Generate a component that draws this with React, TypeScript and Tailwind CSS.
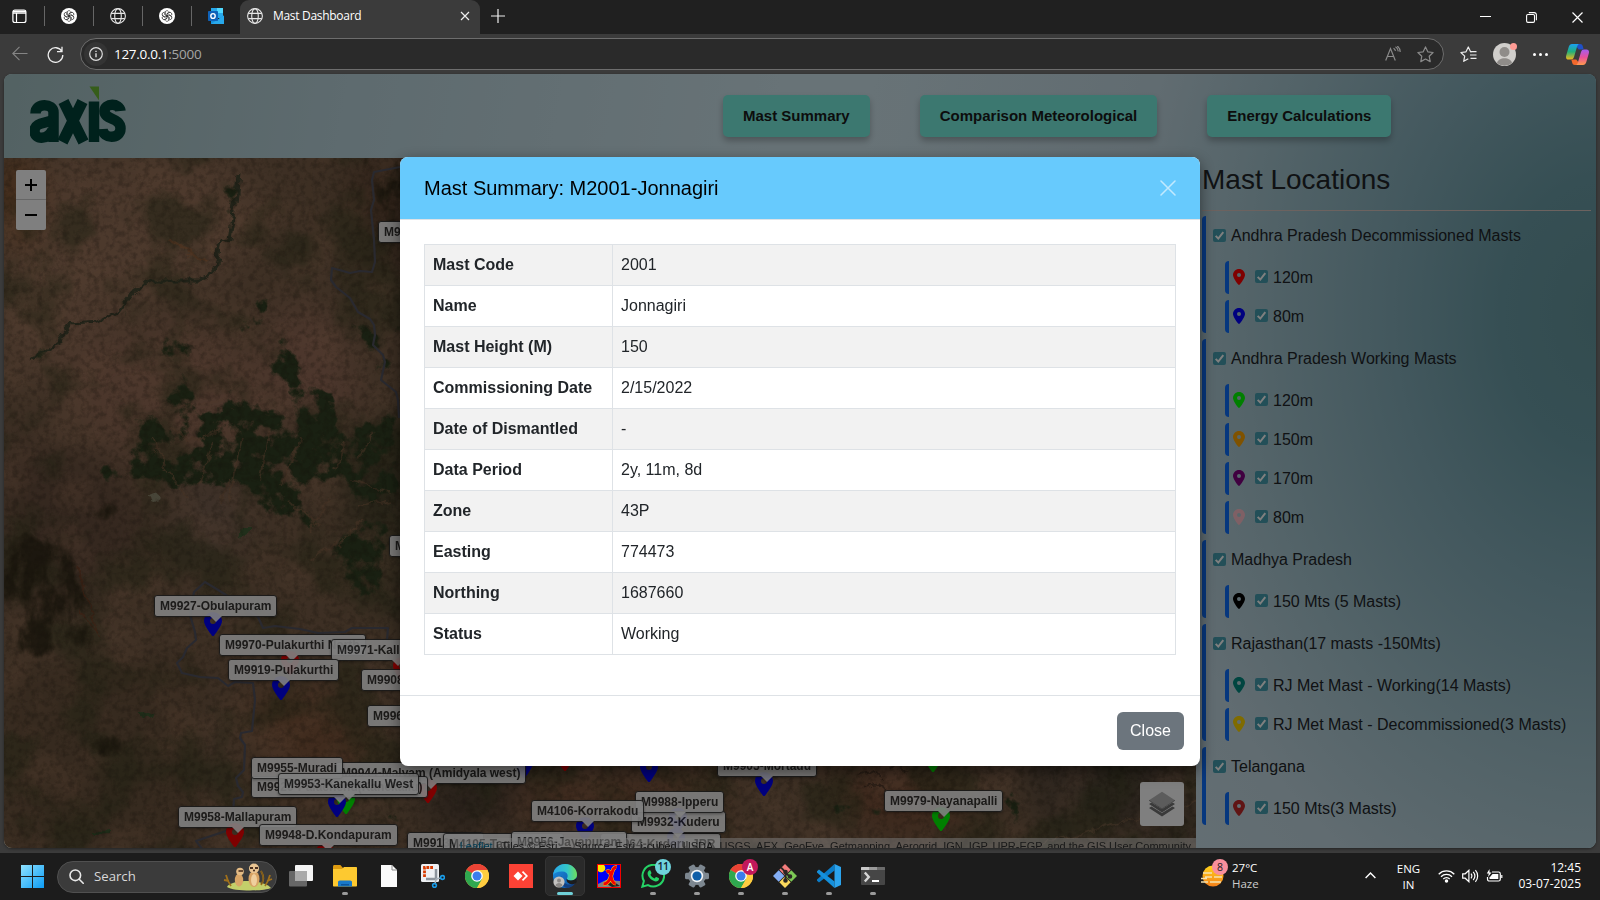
import React from "react";

const UI = "font-['Open_Sans','Noto_Sans',sans-serif]";
const PIN =
  "M215.7 499.2C267 435 384 279.4 384 192C384 86 298 0 192 0S0 86 0 192c0 87.4 117 243 168.3 307.2c12.3 15.3 35.1 15.3 47.4 0zM192 128a64 64 0 1 1 0 128 64 64 0 1 1 0-128z";

/* ---------- small icons ---------- */

function Globe() {
  return (
    <svg width="16" height="16" viewBox="0 0 16 16" fill="none" stroke="#e6e6e6" strokeWidth="1.1">
      <circle cx="8" cy="8" r="7.4" />
      <ellipse cx="8" cy="8" rx="3.3" ry="7.4" />
      <path d="M1.2 5.4h13.6M1.2 10.6h13.6" />
    </svg>
  );
}

function Knot() {
  return (
    <svg width="16" height="16" viewBox="0 0 16 16">
      <circle cx="8" cy="8" r="8" fill="#fff" />
      <g fill="none" stroke="#333" strokeWidth=".75">
        {[0, 60, 120, 180, 240, 300].map((a) => (
          <path key={a} transform={`rotate(${a} 8 8)`} d="M6 6.9V4.6a2 2 0 0 1 3.6-1.1M6 6.9l3.2 1.9M8 5.7l2.9-1.7" />
        ))}
      </g>
    </svg>
  );
}

function Outlook() {
  return (
    <svg width="16" height="16" viewBox="0 0 16 16">
      <path d="M3 0h12v10H3z" fill="#28a8ea" />
      <path d="M9 0h6v5H9z" fill="#50d9ff" />
      <path d="M3 5h6v5H3z" fill="#0364b8" />
      <path d="M16 7.5V16H3V9l6 3z" fill="#1490df" />
      <path d="M16 7.5 3 16h13z" fill="#28a8ea" />
      <rect x="0" y="3" width="10" height="10" rx=".8" fill="#0f62b8" />
      <ellipse cx="5" cy="8" rx="2.2" ry="2.4" fill="none" stroke="#fff" strokeWidth="1.4" />
    </svg>
  );
}

function Chrome() {
  return (
    <svg width="24" height="24" viewBox="0 0 24 24">
      <circle cx="12" cy="12" r="12" fill="#ffcd40" />
      <path d="M12 12 1.6 6A12 12 0 0 1 22.4 6z" fill="#ea4335" />
      <path d="M12 6h10.4A12 12 0 0 0 1.6 6l5.2 3z" fill="#ea4335" />
      <path d="M1.6 6A12 12 0 0 0 12 24l5.2-9L12 12z" fill="#2fa84f" />
      <path d="M22.4 6A12 12 0 0 1 12 24l5.2-9L12 6z" fill="#ffcd40" />
      <circle cx="12" cy="12" r="5.8" fill="#fff" />
      <circle cx="12" cy="12" r="4.5" fill="#3b7ded" />
    </svg>
  );
}

function Edge() {
  return (
    <svg width="24" height="24" viewBox="0 0 24 24">
      <defs>
        <linearGradient id="eg1" x1="0" x2="1">
          <stop offset="0" stopColor="#2aa8e8" />
          <stop offset=".6" stopColor="#34c7c8" />
          <stop offset="1" stopColor="#6fe05a" />
        </linearGradient>
        <linearGradient id="eg2" x1="0" y1="0" x2="1" y2="1">
          <stop offset="0" stopColor="#1b8fe0" />
          <stop offset="1" stopColor="#0e4fa0" />
        </linearGradient>
      </defs>
      <circle cx="12" cy="12" r="12" fill="url(#eg2)" />
      <path d="M0 11C1 4 6 0 12 0c7 0 12 5 12 10.500 0 4-3 6-6.300 6-2.700 0-4.200-1-3.800-2.200 1.600-2 .9-6.300-4-6.800C5.500 7.100 1.500 8.500 0 11z" fill="url(#eg1)" />
      <path d="M9 12c-1 4 3 9 8 8.600 2.400-.1 4.200-.9 5.500-2-1.500 3.200-4.500 5-7.500 5.400C8 23 5.500 16.500 9 12z" fill="#123f80" />
      <path d="M13.900 14.300c-.4 1.200 1.100 2.200 3.800 2.200 2.500 0 5-1.200 6-3.300v5l-1.500 1.300c-5 2-10-1-8.300-5.200z" fill="#1c1c1c" />
      <circle cx="6" cy="18" r="5.600" fill="#c3c1bf" />
      <circle cx="6" cy="16.400" r="2" fill="#8a8785" />
      <path d="M2.500 21.500c.5-3.500 6.500-3.500 7 0-2 2-5 2-7 0z" fill="#8a8785" />
    </svg>
  );
}

function Folder() {
  return (
    <svg width="24" height="24" viewBox="0 0 24 24">
      <path d="M0 2.500C0 1.700.6 1 1.400 1h6L10 4v4H0z" fill="#dd9a10" />
      <path d="M0 5h9l2-2h12c.6 0 1 .4 1 1v17.500c0 .6-.4 1-1 1H1c-.6 0-1-.4-1-1z" fill="#fdc930" />
      <path d="M5 22.500v-4.300c0-1 .8-1.800 1.800-1.800h10.400c1 0 1.800.8 1.800 1.800v4.300z" fill="#1878c8" />
      <path d="M8 20h8v1.500H8z" fill="#0b559c" />
    </svg>
  );
}

function Snip() {
  return (
    <svg width="24" height="24" viewBox="0 0 24 24">
      <rect x="0" y="0" width="18" height="18" rx="1.500" fill="#eef0f3" />
      <path d="M3.500 13V3.500H13" fill="none" stroke="#d83b01" strokeWidth="2.800" strokeDasharray="2.800 1" />
      <path d="M15 5v10H5" fill="none" stroke="#8d949c" strokeWidth="2.500" />
      <path d="m15 15 5-1M15 15l-1 5" stroke="#a8b0b8" strokeWidth="1.500" />
      <g fill="none" stroke="#1a9be6" strokeWidth="1.600">
        <circle cx="21.500" cy="13.500" r="1.900" />
        <circle cx="13.500" cy="21.500" r="1.900" />
      </g>
    </svg>
  );
}

function AnyDesk() {
  return (
    <svg width="24" height="24" viewBox="0 0 24 24">
      <rect width="24" height="24" fill="#fb4235" />
      <path d="m9 7.500 4.500 4.500L9 16.500 4.500 12z" fill="#fff" />
      <path d="m13.500 7.700 4.300 4.300-4.300 4.300" fill="none" stroke="#fff" strokeWidth="1.700" />
    </svg>
  );
}

function XLaunch() {
  return (
    <svg width="24" height="24" viewBox="0 0 24 24">
      <rect width="24" height="24" fill="#0000f4" />
      <path d="M1 20l8-4 14 1v6H1z" fill="#808080" />
      <path d="M8 19l9-1 6 4-8 1z" fill="#222" />
      <circle cx="4" cy="4" r="4.300" fill="#ffe800" />
      <path d="M9.500 8c3-2 4 1 4.500 4s1.500 7.500 4.500 7.500M19.500 3.500c-3-1-4 3.500-5.500 8.500S10.500 20 6.500 20" fill="none" stroke="#ffd800" strokeWidth="4" />
      <path d="M9.500 8c3-2 4 1 4.500 4s1.500 7.500 4.500 7.500M19.500 3.500c-3-1-4 3.500-5.500 8.500S10.500 20 6.500 20" fill="none" stroke="#f40000" strokeWidth="3" />
      <rect x=".5" y=".5" width="23" height="23" fill="none" stroke="#f40000" />
    </svg>
  );
}

function WhatsApp() {
  return (
    <svg width="24" height="24" viewBox="0 0 24 24">
      <path d="M1.300 22.700 2.900 17A10.800 10.800 0 1 1 7 21.100z" fill="none" stroke="#25d366" strokeWidth="2" />
      <path d="M8 6.500c.5-.4 1.200-.4 1.500.2l.9 2.100c.1.400 0 .8-1 1.900.9 1.800 2.300 3 4.200 3.800.8-1.100 1.200-1.700 1.700-1.500l2.300 1.100c.5.300.5.900.2 1.700-.5 1.200-2 1.800-3.200 1.600-4.200-.8-7.700-4.600-8-7.700-.1-1.200.5-2.500 1.400-3.200z" fill="#25d366" />
    </svg>
  );
}

function Gear() {
  return (
    <svg width="24" height="24" viewBox="0 0 24 24">
      <g fill="#7d8790">
        {[30, 90, 150].map((a) => (
          <rect key={a} x="8.700" y="0" width="6.600" height="24" rx="1.500" transform={`rotate(${a} 12 12)`} />
        ))}
        <circle cx="12" cy="12" r="9" />
      </g>
      <circle cx="12" cy="12" r="6.200" fill="#f2f4f6" />
      <circle cx="12" cy="12" r="4.600" fill="#0f5ea8" />
    </svg>
  );
}

function Git() {
  return (
    <svg width="24" height="24" viewBox="0 0 24 24">
      <path d="m12 0 5.700 5.700L12 11.400 6.300 5.700z" fill="#f27c7c" />
      <path d="m5.700 6.300 5.700 5.700-5.700 5.700L0 12z" fill="#84aef5" />
      <path d="m18.300 6.300L24 12l-5.700 5.700L12.600 12z" fill="#7cc855" />
      <path d="m12 12.600 5.700 5.700L12 24l-5.700-5.700z" fill="#fbd95c" />
      <g stroke="#2a2623" strokeWidth="1.800" fill="#2a2623">
        <path d="M8 3.500 12.500 8v9M12.500 9l5 4" fill="none" />
        <circle cx="12.500" cy="8" r="1.400" />
        <circle cx="17" cy="12.500" r="1.400" />
        <circle cx="12.500" cy="16.500" r="1.400" />
      </g>
    </svg>
  );
}

function Code() {
  return (
    <svg width="24" height="24" viewBox="0 0 24 24">
      <path d="M17.500 0v6.500L2 18.500l-2-1.700v-1.200z" fill="#0a7cc8" />
      <path d="M17.500 24v-6.500L2 5.500 0 7.200v1.200z" fill="#1590dc" />
      <path d="M17.500 0 24 3v18l-6.500 3z" fill="#2ba4ee" />
    </svg>
  );
}

function Terminal() {
  return (
    <svg width="24" height="24" viewBox="0 0 24 24">
      <rect y="3" width="24" height="18" rx="1" fill="#464646" />
      <path d="M0 4c0-.6.4-1 1-1h7v3H0z" fill="#c9c9c9" />
      <path d="M8 3h8v3H8z" fill="#9a9a9a" />
      <path d="M16 3h7c.6 0 1 .4 1 1v2h-8z" fill="#6c6c6c" />
      <path d="m3.800 8.500 4 4.500-4 4.500" fill="none" stroke="#d6d6d6" strokeWidth="2.400" />
      <path d="M11 17h7" stroke="#fff" strokeWidth="2" />
    </svg>
  );
}

function TaskView() {
  return (
    <svg width="24" height="24" viewBox="0 0 24 24">
      <rect x="6" y="1" width="18" height="16" rx="1" fill="#f4f4f4" />
      <rect x="0" y="7" width="18" height="15.500" rx="1" fill="#666" />
      <path d="M6 7h12v10H6z" fill="#a9a9a9" />
    </svg>
  );
}

function Doc() {
  return (
    <svg width="24" height="24" viewBox="0 0 24 24">
      <path d="M4 1h11l5 5v17H4z" fill="#fafafa" />
      <path d="M15 1v5h5" fill="none" stroke="#8a8a8a" />
    </svg>
  );
}

function Meerkats() {
  return (
    <svg width="50" height="28" viewBox="0 0 50 28">
      <path d="M4 24c3-7 36-9 44 1-8 3.500-38 3.500-44-1z" fill="#c3cf6a" />
      <path d="M3 12c1 4 2 7 5 11M1 17l5 1M47 12c-1 4-2 7-5 11M49 16l-5 2M38 8c3 5 3 10 0 14" stroke="#a0701c" strokeWidth="1.800" fill="none" />
      <path d="M38 8c3 5 3 9 0 13" stroke="#7b5a1c" strokeWidth="1.300" fill="none" />
      <ellipse cx="16" cy="17" rx="4.200" ry="6.500" fill="#d9a566" />
      <circle cx="17" cy="8.500" r="3.800" fill="#e4bb84" />
      <path d="M15.500 8h4.500" stroke="#4a3020" strokeWidth="1.600" />
      <ellipse cx="31" cy="16" rx="5.500" ry="8" fill="#d7a364" />
      <ellipse cx="31" cy="17" rx="3" ry="6" fill="#efcf9e" />
      <circle cx="31" cy="5.500" r="5" fill="#e8c492" />
      <path d="M27 5h3M32 5h3" stroke="#4a3020" strokeWidth="2" />
      <circle cx="31" cy="7.500" r="1" fill="#3b2418" />
    </svg>
  );
}

/* ---------- browser chrome ---------- */

function TabBar() {
  const pinned = [<Knot key="a" />, <Globe key="b" />, <Knot key="c" />, <Outlook key="d" />];
  return (
    <div className="flex h-[34px] items-stretch bg-[#202020]">
      <div className="flex w-[44px] shrink-0 items-center pb-[2px] pl-[12px]">
        <svg width="15" height="15" viewBox="0 0 15 15" fill="none" stroke="#fff" strokeWidth="1.200">
          <rect x=".9" y="1" width="13" height="12.500" rx="2" />
          <path d="M1 4.200h13M4.500 4v9.500" />
          <path d="M1 2.500h13" strokeWidth="2" />
        </svg>
      </div>
      {pinned.map((icon, i) => (
        <div key={i} className="flex w-[49px] shrink-0 items-center pb-[2px]">
          <div className="h-5 w-px shrink-0 bg-[#666]" />
          <div className="ml-[16px] shrink-0">{icon}</div>
        </div>
      ))}
      <div className="flex w-[240px] shrink-0 items-center rounded-t-[9px] bg-[#3b3b3b] pb-[2px] pl-[7px] pr-[10px]">
        <Globe />
        <span className={`ml-[10px] grow text-[12px] tracking-[-0.300px] text-white ${UI}`}>Mast Dashboard</span>
        <svg width="10" height="10" viewBox="0 0 10 10" stroke="#eee" strokeWidth="1.200">
          <path d="m1 1 8 8M9 1 1 9" />
        </svg>
      </div>
      <div className="flex grow items-center pb-[2px] pl-[11px]">
        <svg width="14" height="14" viewBox="0 0 14 14" stroke="#eee" strokeWidth="1.200">
          <path d="M7 0v14M0 7h14" />
        </svg>
      </div>
      <div className="flex items-center gap-[35px] pr-[17px]">
        <svg width="11" height="11" viewBox="0 0 11 11" stroke="#fff">
          <path d="M0 4.500h11" />
        </svg>
        <svg width="11" height="11" viewBox="0 0 11 11" fill="none" stroke="#fff" strokeWidth="1.100">
          <rect x=".6" y="2.500" width="7.900" height="7.900" rx="1.300" />
          <path d="M2.800.6h5.400a2.200 2.200 0 0 1 2.200 2.200v5.400" />
        </svg>
        <svg width="11" height="11" viewBox="0 0 11 11" stroke="#fff" strokeWidth="1.200">
          <path d="m.5.5 10 10M10.500.5l-10 10" />
        </svg>
      </div>
    </div>
  );
}

function Toolbar() {
  return (
    <div className="flex h-[40px] items-center bg-[#3b3b3b] pl-[12px] pr-[11px]">
      <svg width="16" height="16" viewBox="0 0 16 16" fill="none" stroke="#858585" strokeWidth="1.100">
        <path d="M15.500 7.500H.8M7.500.8.800 7.500l6.700 6.700" />
      </svg>
      <svg className="ml-[19px]" width="17" height="17" viewBox="0 0 17 17" fill="none" stroke="#eee" strokeWidth="1.300">
        <path d="M14.900 5.500A7.300 7.300 0 1 0 15.800 9M15 .8v4.900h-5" />
      </svg>
      <div className="ml-[16px] flex h-[32px] w-[1364px] shrink-0 items-center rounded-full border border-[#6d6d6d] bg-[#2a2a2a] pl-[3px] pr-[9px]">
        <div className="flex h-6 w-6 items-center justify-center rounded-full bg-[#343434]">
          <svg width="14" height="14" viewBox="0 0 14 14" fill="none" stroke="#ddd" strokeWidth="1.200">
            <circle cx="7" cy="7" r="6.300" />
            <path d="M7 6.200v4M7 3.700v1.400" strokeWidth="1.400" />
          </svg>
        </div>
        <span className={`ml-[6px] grow text-[13.500px] tracking-[-0.290px] text-white ${UI}`}>
          127.0.0.1<span className="text-[#a5a5a5]">:5000</span>
        </span>
        <svg width="16" height="16" viewBox="0 0 16 16" fill="none" stroke="#8a8a8a" strokeWidth="1.200">
          <path d="m.7 14.500 4.800-12 4.800 12M2.300 10.500h6.400M8.500 2.300c1 .5 1.700 1.300 2 2.600M10.500.8c1.700 1 2.700 2.400 2.800 4.600M12.300 0c1.900 1.500 2.900 3.500 2.900 6" />
        </svg>
        <svg className="ml-[16px]" width="17" height="17" viewBox="0 0 17 17" fill="none" stroke="#8a8a8a" strokeWidth="1.200" strokeLinejoin="round">
          <path d="m8.500.9 2.300 4.900 5.300.7-3.900 3.700 1 5.400-4.700-2.600-4.700 2.600 1-5.400L.9 6.500l5.300-.7z" />
        </svg>
      </div>
      <svg className="ml-[16px]" width="17" height="17" viewBox="0 0 17 17" fill="none" stroke="#eee" strokeWidth="1.200" strokeLinejoin="round">
        <path d="M11.500 5.800h-.9L8.300 1 6 5.800l-5.100.7 3.800 3.600-1 5.200 4.600-2.500M11 5.600h5.500M10 9h6.500M10.500 12.400h6" />
      </svg>
      <div className="relative ml-[16px] h-[23px] w-[23px]">
        <svg width="23" height="23" viewBox="0 0 23 23">
          <circle cx="11.500" cy="11.500" r="11.500" fill="#d0cecb" />
          <circle cx="11.500" cy="9" r="5" fill="#8f8c89" />
          <path d="M4 20c1-6.500 14-6.500 15 0a11.500 11.500 0 0 1-15 0z" fill="#8f8c89" />
        </svg>
        <div className="absolute -right-[1px] top-0 h-[7px] w-[7px] rounded-full bg-[#ff9b94]" />
      </div>
      <div className="ml-[17px] flex gap-[3px]">
        <div className="h-[3px] w-[3px] rounded-full bg-white" />
        <div className="h-[3px] w-[3px] rounded-full bg-white" />
        <div className="h-[3px] w-[3px] rounded-full bg-white" />
      </div>
      <svg className="ml-auto" width="23" height="21" viewBox="0 0 23 21">
        <defs>
          <linearGradient id="cp1" x1="0" y1="0" x2="0" y2="1">
            <stop offset="0" stopColor="#1aa0f2" />
            <stop offset=".5" stopColor="#22b07a" />
            <stop offset="1" stopColor="#f0b81c" />
          </linearGradient>
          <linearGradient id="cp2" x1="0" y1="0" x2="0" y2="1">
            <stop offset="0" stopColor="#a45cf0" />
            <stop offset=".5" stopColor="#e8509c" />
            <stop offset="1" stopColor="#ff9a4c" />
          </linearGradient>
        </defs>
        <path d="M11 0h3c2 0 2.600 1.200 3 3l.7 2.500h-5L10 2z" fill="#1f50c8" />
        <path d="M12 21H9c-2 0-2.600-1.200-3-3l-.7-2.500h5L13 19z" fill="#f2682c" />
        <path d="M6 0h7c-1.300.5-1.700 2-2.200 3.500L8 13c-.5 1.700-1.500 2.500-3.300 2.500H2.500C.3 15.500-.4 13.800.200 11.500L2.700 3C3.300 1 4.400 0 6 0z" fill="url(#cp1)" />
        <path d="M17 21h-7c1.300-.5 1.700-2 2.200-3.500L15 8c.5-1.700 1.500-2.500 3.300-2.500h2.200c2.200 0 2.900 1.700 2.300 4L20.300 18c-.6 2-1.700 3-3.300 3z" fill="url(#cp2)" />
      </svg>
    </div>
  );
}

/* ---------- map ---------- */

type Label = { t: string; x: number; y: number; c?: string; px?: number; py?: number };

const LABELS: Label[] = [
  { t: "M9944-Malyam (Amidyala west)", x: 336, y: 762, c: "#f00", px: 428, py: 803 },
  { t: "M9920-Palachenu(Kanekallu)", x: 252, y: 776, c: "#0f0", px: 346, py: 814 },
  { t: "M9955-Muradi", x: 252, y: 757 },
  { t: "M9953-Kanekallu West", x: 279, y: 773, c: "#00f", px: 337, py: 817 },
  { t: "M9903-Chinna", x: 379, y: 221 },
  { t: "M9960-Peda", x: 390, y: 535 },
  { t: "M9927-Obulapuram", x: 155, y: 595, c: "#00f", px: 213, py: 636 },
  { t: "M9970-Pulakurthi North", x: 220, y: 634, c: "#f00", px: 290, py: 675 },
  { t: "M9971-Kalludevipadu", x: 332, y: 639, c: "#f00", px: 402, py: 681 },
  { t: "M9919-Pulakurthi", x: 229, y: 659, c: "#00f", px: 281, py: 700 },
  { t: "M9908-Virupa", x: 362, y: 669 },
  { t: "M9961-Nimbagal", x: 368, y: 705 },
  { t: "M9958-Mallapuram", x: 179, y: 806, c: "#f00", px: 235, py: 847 },
  { t: "M9948-D.Kondapuram", x: 260, y: 824, c: "#f00", px: 325, py: 867 },
  { t: "M9913-Veni", x: 408, y: 832 },
  { t: "M4105-Tagguparthi", x: 444, y: 833 },
  { t: "M9964-Kuderu JPR", x: 601, y: 833 },
  { t: "M9956-Jayapuram", x: 512, y: 831 },
  { t: "M9932-Kuderu", x: 632, y: 811, c: "#00f", px: 676, py: 852 },
  { t: "M9988-Ipperu", x: 636, y: 791, c: "#00f", px: 678, py: 832 },
  { t: "M4106-Korrakodu", x: 532, y: 800, c: "#00f", px: 585, py: 841 },
  { t: "M9905-Mortadu", x: 718, y: 755, c: "#00f", px: 764, py: 796 },
  { t: "M9979-Nayanapalli", x: 885, y: 790, c: "#0f0", px: 941, py: 831 },
];

const LOOSE_PINS = [
  { c: "#00f", px: 524, py: 778 },
  { c: "#f00", px: 565, py: 771 },
  { c: "#00f", px: 649, py: 782 },
  { c: "#0f0", px: 933, py: 772 },
];

function Pin({ c, px, py }: { c: string; px: number; py: number }) {
  return (
    <svg className="absolute" style={{ left: px - 9 - 4, top: py - 24 - 158 }} width="18" height="24" viewBox="0 0 384 512">
      <path d={PIN} fill={c} />
    </svg>
  );
}

function Satellite() {
  return (
    <svg className="block" width="1192" height="690" viewBox="4 158 1192 690" colorInterpolationFilters="sRGB">
      <defs>
        <filter id="grain" x="0" y="0" width="100%" height="100%">
          <feTurbulence type="fractalNoise" baseFrequency=".16" numOctaves="4" seed="4" />
          <feColorMatrix values="0 0 0 0 .14  0 0 0 0 .11  0 0 0 0 .07  3 0 0 0 -1.300" />
        </filter>
        <filter id="light" x="0" y="0" width="100%" height="100%">
          <feTurbulence type="fractalNoise" baseFrequency=".02" numOctaves="7" seed="11" />
          <feColorMatrix values="0 0 0 0 .72  0 0 0 0 .53  0 0 0 0 .41  3.500 0 0 0 -1.700" />
        </filter>
        <filter id="moss" x="0" y="0" width="100%" height="100%">
          <feTurbulence type="fractalNoise" baseFrequency=".015" numOctaves="8" seed="23" />
          <feColorMatrix values="0 0 0 0 .24  0 0 0 0 .25  0 0 0 0 .14  0 5 0 0 -2.400" />
        </filter>
        <filter id="forest" x="-20%" y="-20%" width="140%" height="140%">
          <feGaussianBlur in="SourceAlpha" stdDeviation="8" result="b" />
          <feTurbulence type="fractalNoise" baseFrequency=".05" numOctaves="6" seed="31" />
          <feColorMatrix values="0 0 0 0 0  0 0 0 0 0  0 0 0 0 0  1 0 0 0 0" result="n" />
          <feComposite operator="arithmetic" in="b" in2="n" k1="0" k2=".6" k3="1" k4="-.92" />
          <feColorMatrix values="0 0 0 0 .2  0 0 0 0 .25  0 0 0 0 .14  0 0 0 7 0" />
        </filter>
        <filter id="dusk" x="-20%" y="-20%" width="140%" height="140%">
          <feGaussianBlur in="SourceAlpha" stdDeviation="7" result="b" />
          <feTurbulence type="fractalNoise" baseFrequency=".04 .025" numOctaves="5" seed="9" />
          <feColorMatrix values="0 0 0 0 0  0 0 0 0 0  0 0 0 0 0  1 0 0 0 0" result="n" />
          <feComposite operator="arithmetic" in="b" in2="n" k1="0" k2=".6" k3="1" k4="-.9" />
          <feColorMatrix values="0 0 0 0 .2  0 0 0 0 .17  0 0 0 0 .1  0 0 0 4 0" />
        </filter>
        <filter id="rough" x="-20%" y="-20%" width="140%" height="140%">
          <feTurbulence type="fractalNoise" baseFrequency=".06" numOctaves="4" seed="7" result="n" />
          <feDisplacementMap in="SourceGraphic" in2="n" scale="14" xChannelSelector="R" yChannelSelector="G" />
          <feGaussianBlur stdDeviation=".7" />
        </filter>
        <filter id="soft" x="-30%" y="-30%" width="160%" height="160%">
          <feGaussianBlur stdDeviation="20" />
        </filter>
      </defs>
      <rect x="4" y="158" width="1192" height="690" fill="#7a5f48" />
      <g filter="url(#soft)">
        <path d="M0 158h230l40 60-60 70-90 20-60 60-60 20z" fill="#987259" />
        <path d="M70 340l130-20 90 60-30 60-140 20-50-50z" fill="#986e58" />
        <path d="M270 300l70 20 20 90-30 30-60-60z" fill="#9a6e5a" />
        <path d="M0 158h26v80H0z" fill="#8a5024" />
        <path d="M0 430l120 40 40 70-60 60L0 600z" fill="#6a503f" />
        <path d="M170 480l60-10 20 70-60 20z" fill="#7a6252" />
        <path d="M340 440l80-30v230l-60-70z" fill="#4a442d" />
        <path d="M350 160h60v110h-40z" fill="#5c4230" />
        <path d="M0 660h200v190H0z" fill="#6c543e" />
        <path d="M240 700l90-20 60 90-110 20z" fill="#80573c" />
        <path d="M410 770l110 0 10 50-90 20z" fill="#4f4034" />
        <path d="M1010 740l190 0v120l-150-20z" fill="#56483a" />
        <path d="M520 780h200v40H520zM820 770l120-5 50 60-120 10z" fill="#7c5038" />
      </g>
      <rect x="4" y="158" width="1192" height="690" filter="url(#light)" opacity=".25" />
      <rect x="4" y="158" width="1192" height="690" filter="url(#moss)" opacity=".5" />
      <g filter="url(#dusk)" opacity=".85">
        <path d="M0 640l20 20 60-10 20-40-30-60-50-20-20 20z" />
        <path d="M68 545l16 20 20 110-16-20-24-60z" />
        <path d="M60 740l50-16 30 20-30 20z" opacity=".8" />
        <path d="M84 512l20-12 28 4 0 12-30 12z" />
        <path d="M100 590l30 90 20 30-20-60z" opacity=".8" />
        <path d="M360 158h50v60l-30 20z" opacity=".7" />
        <path d="M850 750l50 0 0 30-40 0z" opacity=".7" />
        <path d="M160 508h50l-10 50-30-10z" opacity=".5" />
      </g>
      <g filter="url(#forest)">
        <path d="M128 402l20 0 30 40 30 30-20 10-40-20z" />
        <path d="M165 385l24-8 10 24 24 8 0 16-46-4-14-14z" />
        <path d="M205 425l24-30 18 0 34 10 56-14 0 90-70 20-40 0-30-10-30 6z" />
        <path d="M128 440l60-10 10 60-40 4-30-14z" opacity=".9" />
        <path d="M266 330l22 6 14 20 4 40-24-8-12-24z" />
        <path d="M300 385l24-2 2 24-24 8z" />
        <path d="M240 288l24-6 8 36-16 22-18-14z" opacity=".85" />
        <path d="M20 345l40-4-10 24-26 0z" />
        <path d="M225 185l20 0-4 50-20 10z" opacity=".7" />
        <path d="M130 240l40-10 20 20-40 14z" opacity=".6" />
        <path d="M95 465l24-4 6 26-16 10z" opacity=".8" />
        <path d="M160 335l40-6-20 40-30 6z" opacity=".75" />
        <path d="M98 312l30-2-8 18-16 0z" opacity=".8" />
        <path d="M330 430l70-20v90l-50 10z" opacity=".9" />
        <path d="M240 490l50-6 40 30-20 20-40-16z" opacity=".8" />
        <path d="M330 530l60-16v90l-50-10z" opacity=".9" />
        <path d="M340 320l60-10v60l-30 0z" opacity=".7" />
        <path d="M364 712l12-12 4 46-14 4zM392 796l16 0-2 36-18-4z" />
        <path d="M1000 750l20 20 10 70-20 0z" opacity=".8" />
        <path d="M855 796l30 6 0 26-24-6z" opacity=".8" />
        <path d="M815 820l30-20 10 20-20 10z" opacity=".7" />
      </g>
      <g filter="url(#rough)" fill="none" stroke="#8c664a" strokeWidth="1.800" opacity=".6">
        <path d="M150 440l18 34 18 22M215 440l-16 44M243 436l-14 64M270 430l-10 50M300 440l-18 44M230 480l-10 24M330 500l-20 30M350 480l40 10M290 500l30 26M170 430l30 10 20-10M340 540l-30 20M360 520l-20 26M390 500l-30 8M345 440l-10 30M375 430l-16 30" />
        <path d="M1040 846l160-46" stroke="#8a6c50" />
        <path d="M172 238l18 14 16 8" stroke="#a86a40" strokeWidth="3" />
        <path d="M76 570l16 34 4 28M80 610l20 30" stroke="#7c4024" />
        <path d="M856 776q14-8 24 4M866 786q14-6 20 4M890 768q8-8 16 2" stroke="#3c2c20" />
      </g>
      <path d="M234 170l-4 40-4 24-10 6-4 20-7 12-10 5H150l-20 10-15 20-20 10-27 2-16 22-24 14" transform="translate(4 4)" fill="none" stroke="#39422e" strokeWidth="3" strokeLinejoin="round" filter="url(#rough)" opacity=".85" />
      <path d="M211 245l4 6-2 3-3-3z" fill="#a87e5c" />
      <path d="M150 494l5-2 5 6-2 6-6-3z" fill="#8f8a70" filter="url(#rough)" />
      <g filter="url(#rough)" fill="#2e6030" opacity=".7">
        <path d="M95 832l14-2 0 5-14 1zM140 708l16 8-2 3-14-6zM240 528l10 0-4 6-8-1z" />
      </g>
      <rect x="4" y="158" width="1192" height="690" filter="url(#grain)" opacity=".26" />
      <g fill="none" stroke="#53535f" strokeWidth="2.200" strokeLinejoin="round">
        <path d="M400 167l-26 5-2 8 2 20-3 10 3 30 1 22-3 10-12-1-10 2-18-5-1 12 5 7 14 11 8 14 12 7 4 6 1 10-2 10 10 10 2 7-4 18 15 12 2 8 1 18" />
        <path d="M387 640l1-12h-36l-7 4-27 1-18-4-25-3-12 2-5-11-35-24-18-11-11 10-4 23 5 17 1 8-9 8-4 9-6 6 5 10 18 4 18 1 10 8 7-4 18 1 2 17-3 31-11 2-1 5 5 7-1 25-8 8 2 8 5 6-1 5-8 2-2 30-36 12 14 18" />
      </g>
    </svg>
  );
}

function MapView() {
  return (
    <div className="relative h-[690px] w-[1192px] shrink-0 overflow-hidden">
      <Satellite />
      {LOOSE_PINS.map((p, i) => (
        <Pin key={i} {...p} />
      ))}
      {LABELS.map((l) => (l.c ? <Pin key={l.t} c={l.c} px={l.px!} py={l.py!} /> : null))}
      {LABELS.map((l) => (
        <div
          key={l.t}
          className="absolute flex h-[22px] items-center whitespace-nowrap rounded-[3px] border border-[#333] bg-white px-[5px] text-[12px] font-bold text-[#333] opacity-90 shadow-[0_1px_3px_rgba(0,0,0,.4)]"
          style={{ left: l.x - 5, top: l.y - 158 }}
        >
          {l.t}
          <div className="absolute left-1/2 top-full -ml-[6px] h-0 w-0 border-x-[6px] border-t-[6px] border-x-transparent border-t-white" />
        </div>
      ))}
      <div className="absolute left-[12px] top-[12px] flex w-[30px] flex-col overflow-hidden rounded-[2px] bg-white text-black">
        <div className="flex h-[30px] items-center justify-center border-b border-[#ccc]">
          <svg width="12" height="12" viewBox="0 0 12 12" stroke="#000" strokeWidth="2">
            <path d="M6 0v12M0 6h12" />
          </svg>
        </div>
        <div className="flex h-[30px] items-center justify-center">
          <svg width="12" height="12" viewBox="0 0 12 12" stroke="#000" strokeWidth="2">
            <path d="M0 6h12" />
          </svg>
        </div>
      </div>
      <div className="absolute left-[1136px] top-[624px] flex h-[44px] w-[44px] items-center justify-center rounded-[3px] bg-white">
        <svg width="26" height="26" viewBox="0 0 26 26">
          <path d="m0 17 13 8.500L26 17l-2.500-1.500L13 22 2.500 15.500z" fill="#747474" />
          <path d="m0 13 13 8.500L26 13l-2.500-1.500L13 18 2.500 11.500z" fill="#747474" />
          <path d="m13 .8 13 8.500-13 8.500L0 9.300z" fill="#b9b9b9" />
          <path d="m0 9.300 13 8.500 13-8.500" fill="none" stroke="#8f8f8f" />
        </svg>
      </div>
      <div className="absolute right-0 top-[680px] whitespace-nowrap bg-white/50 px-[5px] text-[11px] leading-[17px] text-[#333]">
        <span className="text-[#0078a8]">Leaflet</span> | Tiles © Esri — Source: Esri, i-cubed, USDA, USGS, AEX, GeoEye, Getmapping, Aerogrid, IGN, IGP, UPR-EGP, and the GIS User Community
      </div>
    </div>
  );
}

/* ---------- sidebar ---------- */

const GROUPS = [
  { name: "Andhra Pradesh Decommissioned Masts", items: [["#ff0000", "120m"], ["#0000ff", "80m"]] },
  { name: "Andhra Pradesh Working Masts", items: [["#00ff00", "120m"], ["#ffa500", "150m"], ["#800080", "170m"], ["#ffc0cb", "80m"]] },
  { name: "Madhya Pradesh", items: [["#000000", "150 Mts (5 Masts)"]] },
  { name: "Rajasthan(17 masts -150Mts)", items: [["#008b80", "RJ Met Mast - Working(14 Masts)"], ["#ffd700", "RJ Met Mast - Decommissioned(3 Masts)"]] },
  { name: "Telangana", items: [["#c02828", "150 Mts(3 Masts)"]] },
];

function Check() {
  return (
    <svg width="13" height="13" viewBox="0 0 13 13" className="shrink-0">
      <rect width="13" height="13" rx="2" fill="#469fb0" />
      <path d="m2.700 6.900 2.600 2.700 5-6.400" fill="none" stroke="#fff" strokeWidth="2" />
    </svg>
  );
}

function Sidebar() {
  return (
    <div className="flex w-[400px] flex-col pl-[6px] pr-[5px] text-[16px] text-[#212529]">
      <h2 className="flex h-[53px] items-center border-b border-[#d8c4be] pb-[8px] text-[28px] leading-none">Mast Locations</h2>
      <div className="mt-[5px] flex flex-col gap-[6px]">
        {GROUPS.map((g) => (
          <div key={g.name} className="flex flex-col gap-[6px] rounded-[4px] border-l-4 border-[#0d6efd] pl-[7px]">
            <div className="flex h-[39px] items-center gap-[5px]">
              <Check />
              <span>{g.name}</span>
            </div>
            {g.items.map(([color, text]) => (
              <div key={text} className="ml-[12px] flex h-[33px] items-center rounded-[4px] border-l-4 border-[#0d6efd] pl-[4px]">
                <div className="flex items-center pb-[2px]">
                  <svg width="12" height="16" viewBox="0 0 384 512">
                    <path d={PIN} fill={color} />
                  </svg>
                  <div className="ml-[10px] mr-[5px] flex">
                    <Check />
                  </div>
                </div>
                <span>{text}</span>
              </div>
            ))}
          </div>
        ))}
      </div>
    </div>
  );
}

/* ---------- header ---------- */

function HeaderButton({ children }: { children: React.ReactNode }) {
  return (
    <button className="h-[42px] rounded-[5px] bg-[#78f0e0] px-[20px] text-[15px] font-bold text-[#1a1a1a] shadow-[0_4px_6px_rgba(0,0,0,.25)]">
      {children}
    </button>
  );
}

function Header() {
  return (
    <div className="flex h-[84px] items-start pl-[26px] pt-[12px]">
      <svg width="97" height="60" viewBox="29.500 87.500 97 60" role="img">
        <g fill="none" stroke="#004238" strokeWidth="10.500">
          <path d="M35 115c0-11.500 18-10.500 18-1v29.500" />
          <path d="M52 121.500c-6 3.500-18 2-18 11 0 9 13 9.500 18-1" />
          <path d="M63 103l20 40.500M82 103l-20 40.500" strokeWidth="11" />
          <path d="M93.500 103v40.500" />
          <path d="M120 112.500c-1-8.500-16-8-16 0 0 9.500 16 6 16 17.500 0 11-17.500 11-18 .5" />
        </g>
        <path d="M89 88h9.500v14z" fill="#6cba34" />
      </svg>
      <div className="ml-[596px] mt-[9px] flex gap-[50px]">
        <HeaderButton>Mast Summary</HeaderButton>
        <HeaderButton>Comparison Meteorological</HeaderButton>
        <HeaderButton>Energy Calculations</HeaderButton>
      </div>
    </div>
  );
}

/* ---------- modal ---------- */

const ROWS = [
  ["Mast Code", "2001"],
  ["Name", "Jonnagiri"],
  ["Mast Height (M)", "150"],
  ["Commissioning Date", "2/15/2022"],
  ["Date of Dismantled", "-"],
  ["Data Period", "2y, 11m, 8d"],
  ["Zone", "43P"],
  ["Easting", "774473"],
  ["Northing", "1687660"],
  ["Status", "Working"],
];

function Modal() {
  return (
    <div className="h-[609px] w-[800px] overflow-hidden rounded-[8px] bg-white text-[16px] text-[#212529] shadow-[0_5px_15px_rgba(0,0,0,.5)]">
      <div className="flex h-[63px] items-center justify-between border-b border-[#dee2e6] bg-[#67cafd] px-[24px]">
        <h5 className="text-[20px] text-black">Mast Summary: M2001-Jonnagiri</h5>
        <svg width="16" height="16" viewBox="0 0 16 16" stroke="#fff" strokeWidth="1.500" strokeLinecap="round" opacity=".6">
          <path d="m1 1 14 14M15 1 1 15" />
        </svg>
      </div>
      <div className="px-[24px] pb-[40px] pt-[24px]">
        <div className="border-l border-t border-[#dee2e6]">
          {ROWS.map(([k, v], i) => (
            <div key={k} className={i % 2 ? "flex h-[41px] border-b border-[#dee2e6] bg-white" : "flex h-[41px] border-b border-[#dee2e6] bg-[#f2f2f2]"}>
              <div className="flex w-[188px] items-center border-r border-[#dee2e6] pl-[8px] font-bold">{k}</div>
              <div className="flex grow items-center border-r border-[#dee2e6] pl-[8px]">{v}</div>
            </div>
          ))}
        </div>
      </div>
      <div className="flex justify-end border-t border-[#dee2e6] px-[16px] pt-[16px]">
        <button className="h-[38px] w-[67px] rounded-[6px] bg-[#6c757d] text-[16px] text-white">Close</button>
      </div>
    </div>
  );
}

/* ---------- taskbar ---------- */

function Taskbar() {
  const apps: { icon: React.ReactNode; dot?: boolean; active?: boolean; badge?: string; pink?: boolean }[] = [
    { icon: <TaskView /> },
    { icon: <Folder />, dot: true },
    { icon: <Doc /> },
    { icon: <Snip /> },
    { icon: <Chrome /> },
    { icon: <AnyDesk /> },
    { icon: <Edge />, active: true },
    { icon: <XLaunch /> },
    { icon: <WhatsApp />, dot: true, badge: "11" },
    { icon: <Gear />, dot: true },
    { icon: <Chrome />, dot: true, badge: "A", pink: true },
    { icon: <Git />, dot: true },
    { icon: <Code />, dot: true },
    { icon: <Terminal />, dot: true },
  ];
  return (
    <div className={`flex h-[47px] items-center bg-[#1c1c1c] pl-[21px] text-white ${UI}`}>
      <svg width="23" height="23" viewBox="0 0 23 23">
        <defs>
          <linearGradient id="win" x1="0" y1="0" x2="1" y2="1">
            <stop offset="0" stopColor="#8fe2ff" />
            <stop offset="1" stopColor="#0c9cf5" />
          </linearGradient>
        </defs>
        <path d="M0 0h11v11H0zM12 0h11v11H12zM0 12h11v11H0zM12 12h11v11H12z" fill="url(#win)" />
      </svg>
      <div className="ml-[13px] flex h-[32px] w-[220px] items-center rounded-full border border-[#505050] bg-[#3b3b3b] pl-[11px] pr-[3px]">
        <svg width="15" height="15" viewBox="0 0 15 15" fill="none" stroke="#e8e8e8" strokeWidth="1.600" strokeLinecap="round">
          <circle cx="6.300" cy="6.300" r="5.300" />
          <path d="m10.200 10.200 4 4" />
        </svg>
        <span className="ml-[10px] grow text-[13.200px] text-[#d8d8d8]">Search</span>
        <Meerkats />
      </div>
      <div className="ml-[2px] flex">
        {apps.map((a, i) => (
          <div key={i} className="relative flex h-[47px] w-[44px] items-center justify-center">
            {a.active && <div className="absolute left-[2px] top-[3px] h-[40px] w-[40px] rounded-[5px] border border-[#343434] bg-[#2a2a2a]" />}
            <div className="relative -mt-px flex">{a.icon}</div>
            {a.badge && (
              <div
                className={
                  a.pink
                    ? "absolute left-[23px] top-[6px] flex h-[16px] w-[16px] items-center justify-center rounded-full bg-[#c2185b] text-[10px] font-semibold text-white"
                    : "absolute left-[24px] top-[6px] flex h-[16px] w-[16px] items-center justify-center rounded-full bg-[#6fd3dc] text-[10.500px] font-semibold tracking-[-0.500px] text-[#123]"
                }
              >
                {a.badge}
              </div>
            )}
            {a.active && <div className="absolute left-[14px] top-[39px] h-[3px] w-[16px] rounded-full bg-[#6fd0d8]" />}
            {a.dot && <div className="absolute left-[19px] top-[39px] h-[3px] w-[6px] rounded-full bg-[#9a9a9a]" />}
          </div>
        ))}
      </div>
      <div className="ml-[306px] flex items-center pb-[1px] text-[12px] leading-[16px]">
        <div className="relative mb-[6px] h-[28px] w-[24px]">
          <svg width="24" height="28" viewBox="0 0 24 28">
            <defs>
              <linearGradient id="haze" x1="0" y1="0" x2="0" y2="1">
                <stop offset="0" stopColor="#ffd21a" />
                <stop offset="1" stopColor="#f4801a" />
              </linearGradient>
            </defs>
            <circle cx="12" cy="17" r="10.500" fill="url(#haze)" />
            <path d="M2 14h9M4 18h7M13 18h8M0 19.500h6M0 23h7M9 23h11" stroke="#f4e2b0" strokeWidth="1.400" />
          </svg>
          <div className="absolute left-[11px] top-0 flex h-[16px] w-[16px] items-center justify-center rounded-full bg-[#f88f9c] text-[10.500px] text-[#222]">8</div>
        </div>
        <div className="ml-[7px] w-[60px] text-[11.500px]">
          <div>27°C</div>
          <div className="text-[#ccc]">Haze</div>
        </div>
      </div>
      <svg className="ml-[73px] mb-[2px]" width="11" height="7" viewBox="0 0 11 7" fill="none" stroke="#fff" strokeWidth="1.400">
        <path d="m.6 6 4.900-5 4.900 5" />
      </svg>
      <div className="ml-[20px] w-[25px] text-center text-[11.500px] leading-[16px]">
        <div>ENG</div>
        <div>IN</div>
      </div>
      <svg className="ml-[17px] mb-[2px]" width="17" height="14" viewBox="0 0 17 14" fill="none" stroke="#fff" strokeWidth="1.300">
        <path d="M.7 5.200a11 11 0 0 1 15.600 0M3 7.700a7.800 7.800 0 0 1 11 0M5.300 10a4.500 4.500 0 0 1 6.400 0" />
        <circle cx="8.500" cy="12" r="1.100" fill="#fff" />
      </svg>
      <svg className="ml-[7px] mb-[2px]" width="17" height="14" viewBox="0 0 17 14" fill="none" stroke="#fff" strokeWidth="1.200">
        <path d="M.7 4.800h2.500L6.900 1.300v11.400L3.200 9.200H.7zM9 4.700c1 1.300 1 3.300 0 4.600M11.200 2.900c2 2.400 2 5.800 0 8.200M13.400 1.200c3 3.400 3 8.200 0 11.600" />
      </svg>
      <svg className="ml-[7px] mb-[2px]" width="17" height="14" viewBox="0 0 17 14" fill="none" stroke="#fff" strokeWidth="1.200">
        <path d="M6 3h6.500c1 0 1.800.8 1.800 1.800v5.400c0 1-.8 1.800-1.800 1.800H3.300c-1 0-1.800-.8-1.800-1.800V8M15.800 6v3" />
        <path d="M6.500 5h5.800v5H3.500V8.500z" fill="#fff" stroke="none" />
        <path d="M3.500 0 .8 4.500h2L2 8l3.500-4.500h-2z" fill="#fff" stroke="none" />
      </svg>
      <div className="ml-auto mr-[19px] pb-[1px] text-right text-[12px] leading-[16px]">
        <div>12:45</div>
        <div>03-07-2025</div>
      </div>
    </div>
  );
}

export default function App() {
  return (
    <div className="flex h-[900px] w-[1600px] flex-col overflow-hidden bg-[#3b3b3b]">
      <TabBar />
      <Toolbar />
      <div className="h-[779px] px-[4px]">
        <div className="relative flex h-[774px] flex-col overflow-hidden rounded-[8px] bg-[radial-gradient(500px_670px_at_1600px_240px,#66989e_0%,#6c9ea8_20%,#86b0bc_42%,#a8c8d2_72%,#c2d8e2_95%,#c8e0ea00_150%),linear-gradient(100deg,#a6c4c6_0%,#bcd6de_20%,#d0e6ee_45%,#d4e8f0_100%)] font-['Liberation_Sans',Arial,sans-serif] shadow-[0_1px_3px_rgba(0,0,0,.4)]">
          <Header />
          <div className="flex">
            <MapView />
            <Sidebar />
          </div>
          <div className="absolute inset-0 flex justify-center bg-black/50 pt-[83px]">
            <Modal />
          </div>
        </div>
      </div>
      <Taskbar />
    </div>
  );
}
